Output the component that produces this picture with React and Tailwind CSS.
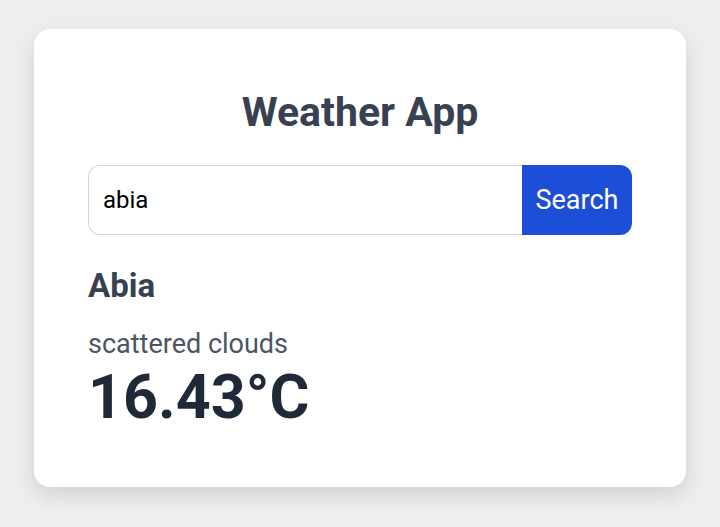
export default function App() {
  return (
    <div className="min-h-screen bg-[#eeeeee] pt-[29px] font-['Roboto',sans-serif]">
      <div className="mx-auto w-[652px] h-[458px] rounded-2xl bg-white px-[54px] pt-[63px] shadow-[0_8px_20px_rgba(0,0,0,0.12)]">
        <h1 className="text-center text-[41px] leading-10 font-bold text-[#374151]">Weather App</h1>
        <div className="mt-[33px] flex h-[70px]">
          <input
            type="text"
            defaultValue="abia"
            className="h-full flex-1 rounded-l-xl border border-r-0 border-gray-300 px-[14px] text-2xl text-black outline-none"
          />
          <button type="button" className="h-full w-[110px] rounded-r-xl bg-[#1d4ed8] text-[27px] text-white">
            Search
          </button>
        </div>
        <h2 className="mt-[33px] text-[33px] leading-9 font-bold text-[#374151]">Abia</h2>
        <p className="mt-6 text-[27px] leading-8 text-[#4b5563]">scattered clouds</p>
        <p className="mt-[7px] text-[61px] leading-none font-bold text-[#1f2937]">16.43°C</p>
      </div>
    </div>
  );
}
